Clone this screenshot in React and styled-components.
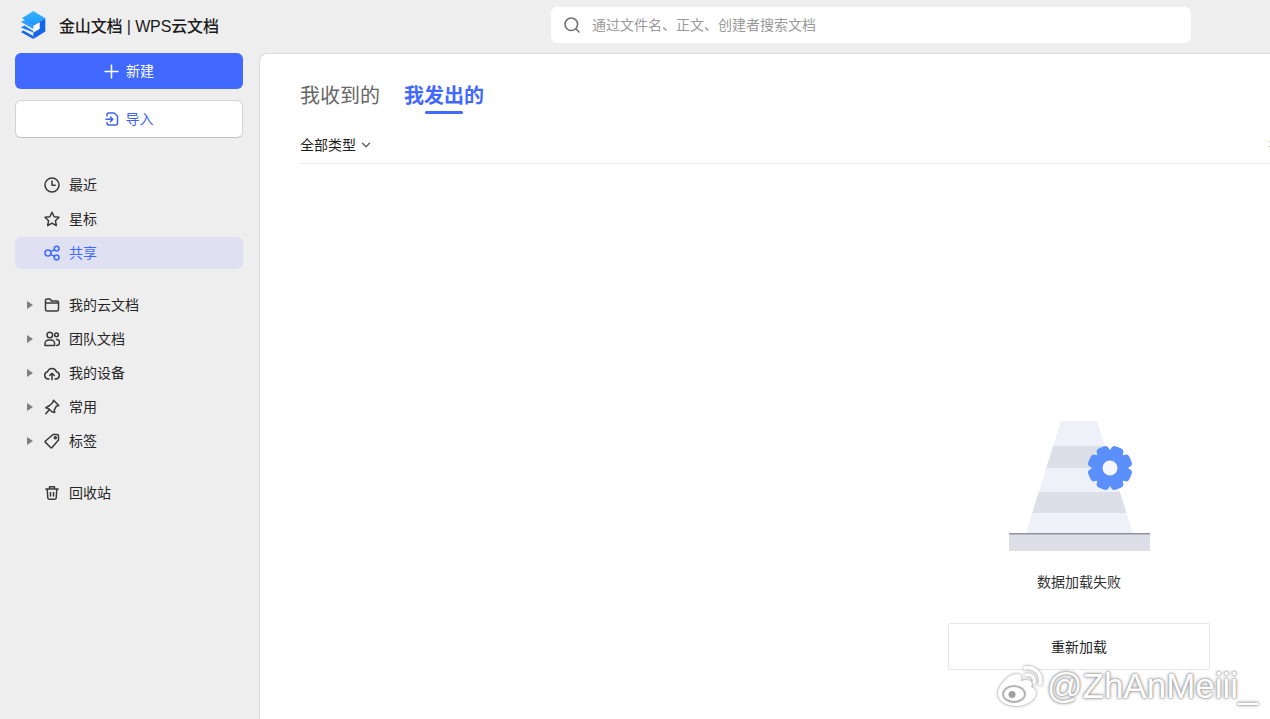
import React from 'react';
import styled, { createGlobalStyle } from 'styled-components';

const Global = createGlobalStyle`
  html, body { margin: 0; padding: 0; height: 100%; overflow: hidden; background: #eeeeee; }
  body { font-family: "Noto Sans CJK SC", "Liberation Sans", sans-serif; color: #1f1f1f; }
`;

const Page = styled.div`
  position: relative;
  width: 1270px;
  height: 719px;
  overflow: hidden;
  display: flex;
  flex-direction: column;
  background: #eeeeee;
`;
const Header = styled.header`
  height: 53px;
  flex: none;
  display: flex;
  align-items: flex-start;
`;
const Brand = styled.div`
  width: 551px;
  flex: none;
  height: 50px;
  padding-left: 20px;
  box-sizing: border-box;
  display: flex;
  align-items: center;
  gap: 13px;
  font-family: "Liberation Sans", "Noto Sans CJK SC", sans-serif;
  font-size: 16px;
  font-weight: 500;
  letter-spacing: -0.13px;
  color: #1b1b1b;
  white-space: nowrap;
`;
const SearchBox = styled.div`
  width: 640px;
  height: 36px;
  margin-top: 7px;
  background: #fff;
  border-radius: 6px;
  display: flex;
  align-items: center;
  padding-left: 12px;
  box-sizing: border-box;
  gap: 11px;
  font-size: 14px;
  color: #9a9a9a;
`;
const Label = styled.span`
  margin-bottom: 2px;
`;
const Body = styled.div`
  flex: 1;
  display: flex;
  min-height: 0;
`;
const Sidebar = styled.aside`
  width: 259px;
  flex: none;
  padding: 0 16px 0 15px;
  box-sizing: border-box;
  display: flex;
  flex-direction: column;
`;
const PrimaryButton = styled.button`
  height: 36px;
  border: none;
  border-radius: 6px;
  background: #4168ff;
  color: #fff;
  font: inherit;
  font-size: 14px;
  display: flex;
  align-items: center;
  justify-content: center;
  gap: 7px;
  padding: 0;
`;
const ImportButton = styled.button`
  height: 38px;
  margin-top: 11px;
  border: 1px solid #d2d2d2;
  border-bottom-color: #c2c2c2;
  border-radius: 6px;
  background: #fff;
  color: #3f63e8;
  font: inherit;
  font-size: 14px;
  display: flex;
  align-items: center;
  justify-content: center;
  gap: 7px;
  padding: 0;
`;
const NavGroup = styled.nav`
  display: flex;
  flex-direction: column;
  gap: 2px;
  margin-top: ${p => p.$top}px;
`;
const NavRow = styled.div`
  height: 32px;
  border-radius: 6px;
  display: flex;
  align-items: center;
  font-size: 14px;
  padding-left: 29px;
  gap: 9px;
  position: relative;
  color: ${p => (p.$active ? '#4168ff' : '#262626')};
  background: ${p => (p.$active ? '#dfe1f2' : 'transparent')};
`;
const Caret = styled.span`
  position: absolute;
  left: 12px;
  top: 12px;
  width: 0;
  height: 0;
  border-left: 6px solid #7f7f7f;
  border-top: 4px solid transparent;
  border-bottom: 4px solid transparent;
`;
const Main = styled.main`
  flex: 1;
  min-width: 0;
  background: #fff;
  border-top: 1px solid #dcdcdc;
  border-left: 1px solid #dcdcdc;
  border-top-left-radius: 8px;
  padding-left: 40px;
  overflow: hidden;
`;
const Content = styled.div`
  width: 1558px;
`;
const Tabs = styled.div`
  display: flex;
  gap: 24px;
  padding-top: 26px;
  height: 45px;
`;
const Tab = styled.div`
  position: relative;
  font-size: 20px;
  line-height: 29px;
  font-weight: ${p => (p.$active ? 700 : 400)};
  color: ${p => (p.$active ? '#4168ff' : '#666666')};
  ${p => p.$active && `
    &::after {
      content: "";
      position: absolute;
      left: 21px;
      top: 31px;
      width: 38px;
      height: 3px;
      border-radius: 2px;
      background: #4168ff;
    }
  `}
`;
const FilterBar = styled.div`
  height: 38px;
  margin-top: 1px;
  box-sizing: border-box;
  border-bottom: 1px solid #ececec;
  display: flex;
  align-items: center;
  font-size: 14px;
  color: #1f1f1f;
  gap: 5px;
`;
const SortLabel = styled(Label)`
  margin-left: 893px;
`;
const Empty = styled.div`
  display: flex;
  flex-direction: column;
  align-items: center;
  margin-top: 256px;
`;
const Message = styled.div`
  margin-top: 20px;
  font-size: 14px;
  line-height: 20px;
  color: #333;
`;
const Reload = styled.button`
  width: 262px;
  height: 47px;
  margin-top: 32px;
  background: #fff;
  border: 1px solid #e6e6e6;
  border-radius: 2px;
  font: inherit;
  font-size: 14px;
  color: #262626;
  padding: 0 0 2px;
`;
const Watermark = styled.div`
  position: absolute;
  left: 997px;
  top: 665px;
  display: flex;
  align-items: center;
  gap: 3px;
  font-family: "Liberation Sans", sans-serif;
  font-size: 35px;
  line-height: 41px;
  color: #fff;
  text-shadow: 0 0 2px #858585, 0 0 3px #a8a8a8, 0 0 4px #c4c4c4;
  white-space: nowrap;
`;

const Ic = styled.svg`
  flex: none;
  display: block;
  fill: none;
  stroke: currentColor;
  stroke-width: 1.5;
  stroke-linecap: round;
  stroke-linejoin: round;
`;
const NavIcon = styled(Ic)`
  color: ${p => (p.$active ? '#4168ff' : '#3a3a3a')};
`;

const Icon = ({ children, active }) => (
  <NavIcon width="16" height="16" viewBox="0 0 16 16" $active={active}>{children}</NavIcon>
);

const Logo = () => (
  <svg width="26" height="28" viewBox="0 0 26 28" style={{ display: 'block', flex: 'none' }}>
    <defs>
      <linearGradient id="logoTop" x1="0" y1="0" x2="0" y2="1">
        <stop offset="0" stopColor="#33b8ff" />
        <stop offset="1" stopColor="#1d8ffb" />
      </linearGradient>
    </defs>
    <path d="M13.300 0 25.300 7.300 13.300 15 2 7.300Z" fill="url(#logoTop)" />
    <path d="M13.300 15 25.300 7.300V20.500L13.300 28V21.500L19.500 17.800V11.500L13.300 15Z" fill="#1368ea" />
    <path d="M13.300 15 19.500 11.500V17.800L13.300 21.500Z" fill="#ffffff" />
    <path d="M.8 10.800 6 8.800 13.300 15V18Z" fill="#2f9dfb" />
    <path d="M.8 16.500 4.500 14.500 13.300 20V21.500Z" fill="#1d7ff5" />
    <path d="M.8 21 3.500 19.500 13.300 25V28Z" fill="#1767ea" />
  </svg>
);

const Gear = () => {
  const teeth = [0, 45, 90, 135, 180, 225, 270, 315];
  return (
    <g transform="translate(101 48)">
      {teeth.map(a => (
        <rect key={a} x="-6.500" y="-22.300" width="13" height="10" rx="4" fill="#5b8ffb" transform={`rotate(${a + 22.5})`} />
      ))}
      <circle r="18.500" fill="#5b8ffb" />
      <circle r="7.500" fill="#f5f7fb" />
    </g>
  );
};

const Cone = () => (
  <svg width="141" height="131" viewBox="0 0 141 131" style={{ display: 'block' }}>
    <path d="M52 1H88L124 113H17Z" fill="#eef1f8" />
    <path d="M44.200 26H96L103 48H37.300Z" fill="#dcdfe8" />
    <path d="M29.800 72H110.800L117.600 93H23.200Z" fill="#dcdfe8" />
    <rect x="0" y="113" width="141" height="18" fill="#dcdfe8" />
    <rect x="0" y="113" width="141" height="1.500" fill="#8f929c" />
    <Gear />
  </svg>
);

const WeiboMark = () => (
  <svg width="47" height="41" viewBox="0 0 47 41" style={{ display: 'block', flex: 'none', filter: 'drop-shadow(0 0 1.500px #858585)' }}>
    <path d="M1 29C1 20 12 9 20 9c4 0 5 3 4 7 6-2 11-1 11 3 0 1 0 2-1 3 3 1 5 3 5 6 0 7-10 13-19 13C9 41 1 36 1 29Z" fill="#fff" />
    <ellipse cx="17" cy="29" rx="11" ry="8" fill="none" stroke="#b4b4b4" strokeWidth="2" />
    <circle cx="15" cy="29.500" r="3.500" fill="#a0a0a0" />
    <path d="M29 10c5-1 9 2 8 8" fill="none" stroke="#fff" strokeWidth="3" strokeLinecap="round" />
    <path d="M28 3c9-2 18 6 15 16" fill="none" stroke="#fff" strokeWidth="3.500" strokeLinecap="round" />
  </svg>
);

const top = [
  { label: '最近', icon: <><circle cx="8" cy="8" r="7" /><path d="M8 4v4.300h3.200" /></> },
  { label: '星标', icon: <path d="M8 1.200l2.100 4.500 4.900.6-3.600 3.400.9 4.900L8 12.200l-4.300 2.400.9-4.900L1 6.300l4.900-.6Z" /> },
  { label: '共享', active: true, icon: <><circle cx="4" cy="8" r="3" /><circle cx="12.600" cy="3.600" r="2.400" /><circle cx="12.600" cy="12.400" r="2.400" /><path d="M6.700 6.600l3.800-1.900M6.700 9.400l3.800 1.900" /></> },
];
const groups = [
  { label: '我的云文档', icon: <><path d="M1.500 3.500a1.500 1.500 0 0 1 1.500-1.500h3l1.500 2h5.500a1.500 1.500 0 0 1 1.500 1.500v7a1.500 1.500 0 0 1-1.500 1.500H3a1.500 1.500 0 0 1-1.500-1.500Z" /><path d="M1.500 6h13" /></> },
  { label: '团队文档', icon: <><circle cx="5.800" cy="4" r="2.800" /><path d="M1 14.500v-2a3.500 3.500 0 0 1 3.500-3.500h2.600a3.500 3.500 0 0 1 3.500 3.500v2Z" /><circle cx="12.500" cy="3.800" r="1.900" /><path d="M12.500 8.500c1.500 0 3 1 3 3s-1 3-3 3" /></> },
  { label: '我的设备', icon: <><path d="M5 14H4.200A3.700 3.700 0 0 1 3.600 6.700 4.600 4.600 0 0 1 12.400 6.700 3.700 3.700 0 0 1 11.800 14H11" /><path d="M8 14.800V8.500M5.700 10.500 8 8.200l2.300 2.300" /></> },
  { label: '常用', icon: <path d="M9.500 1.200 14.800 6.500 12.200 7.300 10.300 11.200 10.700 13.500 7.800 12.700 4.800 9.800 1.800 8.700 5.600 6.500 8.500 3.800ZM5 11 1.800 14.800" /> },
  { label: '标签', icon: <><path d="M9 1.500h4a1.500 1.500 0 0 1 1.500 1.500v4L8 14.500a1 1 0 0 1-1.400 0L1.500 9.400a1 1 0 0 1 0-1.400Z" /><circle cx="11.300" cy="4.700" r="1" /></> },
];

export default function App() {
  return (
    <Page>
      <Global />
      <Header>
        <Brand>
          <Logo />
          金山文档 | WPS云文档
        </Brand>
        <SearchBox>
          <Ic width="18" height="18" viewBox="0 0 18 18" style={{ color: '#6f6f6f' }}>
            <circle cx="8.300" cy="8.300" r="6.300" />
            <path d="M13 13l3 3" />
          </Ic>
          <Label>通过文件名、正文、创建者搜索文档</Label>
        </SearchBox>
      </Header>
      <Body>
        <Sidebar>
          <PrimaryButton>
            <Ic width="15" height="15" viewBox="0 0 15 15"><path d="M7.500 1v13M1 7.500h13" /></Ic>
            <Label>新建</Label>
          </PrimaryButton>
          <ImportButton>
            <Ic width="14" height="14" viewBox="0 0 14 14">
              <path d="M2 4V2.500A1.500 1.500 0 0 1 3.500 1H9l3.500 3v7.500A1.500 1.500 0 0 1 11 13H3.500A1.500 1.500 0 0 1 2 11.500V10.500" />
              <path d="M1 7.300h6.500M5.500 5l2.300 2.300-2.300 2.300" />
            </Ic>
            <Label>导入</Label>
          </ImportButton>
          <NavGroup $top={31}>
            {top.map(r => (
              <NavRow key={r.label} $active={r.active}>
                <Icon active={r.active}>{r.icon}</Icon>
                <Label>{r.label}</Label>
              </NavRow>
            ))}
          </NavGroup>
          <NavGroup $top={20}>
            {groups.map(r => (
              <NavRow key={r.label}>
                <Caret />
                <Icon>{r.icon}</Icon>
                <Label>{r.label}</Label>
              </NavRow>
            ))}
          </NavGroup>
          <NavGroup $top={20}>
            <NavRow>
              <Icon><path d="M1.800 4h12.400M5.500 4V1.800h5V4M3.200 4l.6 9a1.500 1.500 0 0 0 1.500 1.300h5.400a1.500 1.500 0 0 0 1.500-1.300l.6-9M6.500 7.500v3.500M9.500 7.500v3.500" /></Icon>
              <Label>回收站</Label>
            </NavRow>
          </NavGroup>
        </Sidebar>
        <Main>
          <Content>
            <Tabs>
              <Tab>我收到的</Tab>
              <Tab $active>我发出的</Tab>
            </Tabs>
            <FilterBar>
              <Label>全部类型</Label>
              <Ic width="10" height="10" viewBox="0 0 10 10" style={{ color: '#666' }}><path d="M1.500 3.300 5 6.800l3.500-3.500" /></Ic>
              <SortLabel>排序</SortLabel>
            </FilterBar>
            <Empty>
              <Cone />
              <Message>数据加载失败</Message>
              <Reload>重新加载</Reload>
            </Empty>
          </Content>
        </Main>
      </Body>
      <Watermark>
        <WeiboMark />
        @ZhAnMeiii_
      </Watermark>
    </Page>
  );
}
